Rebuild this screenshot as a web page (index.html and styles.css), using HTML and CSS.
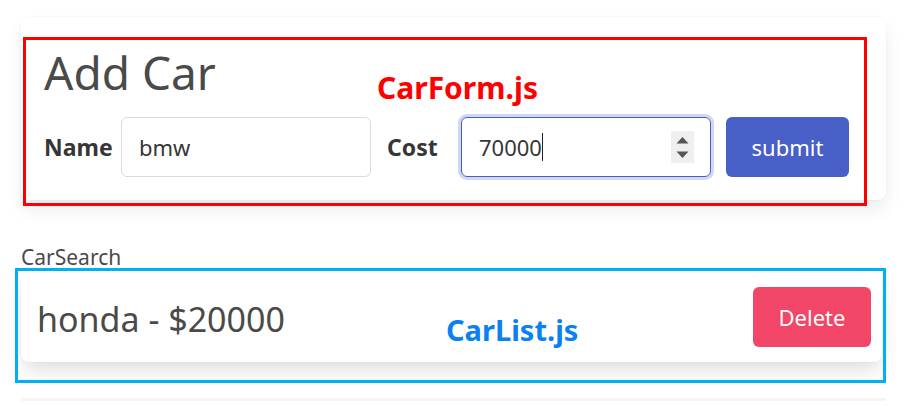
FILE: index.html
```html
<!DOCTYPE html>
<html lang="en">

<head>
  <meta charset="UTF-8" />
  <meta name="viewport" content="width=device-width, initial-scale=1.0" />
  <title>Cars</title>
  <link rel="stylesheet" href="styles.css">
</head>

<body>
  <div class="page">
    <!-- CarForm -->
    <div class="box form-box">
      <h1 class="title">Add Car</h1>
      <form class="car-form">
        <label class="label">Name</label>
        <div class="input">bmw</div>
        <label class="label label-cost">Cost</label>
        <div class="input is-focused">
          <span>70000</span><span class="caret"></span>
          <span class="spinner">
            <svg width="23" height="32" viewBox="0 0 23 32">
              <rect width="23" height="32" fill="#efefef" />
              <path d="M5.5 12.5 L11.5 6 L17.5 12.5 Z" fill="#555" />
              <path d="M5.5 20.5 L11.5 27 L17.5 20.5 Z" fill="#555" />
            </svg>
          </span>
        </div>
        <button class="button is-link" type="button">submit</button>
      </form>
    </div>
    <div class="note note-red">CarForm.js</div>
    <div class="outline outline-red"></div>

    <!-- CarSearch -->
    <div class="search-label">CarSearch</div>

    <!-- CarList -->
    <div class="list">
      <div class="box car-item">
        <p class="car-name">honda - $20000</p>
        <button class="button is-danger" type="button">Delete</button>
      </div>
      <div class="note note-blue">CarList.js</div>
      <div class="outline outline-blue"></div>
    </div>

    <hr class="divider">
  </div>
</body>

</html>
```

FILE: styles.css
```css
body {
  margin: 0;
  background: #fff;
  font-family: "Noto Sans", "Open Sans", sans-serif;
  color: #4a4a4a;
}

.page {
  position: relative;
  padding: 17px 24px 0 21px;
}

.box {
  background: #fff;
  border-radius: 8px;
  box-shadow: 0 10px 20px -3px rgba(10, 10, 10, 0.1), 0 0 0 1px rgba(10, 10, 10, 0.02);
}

.form-box {
  height: 183px;
  box-sizing: border-box;
  padding: 32px 23px 0 23px;
}

.title {
  margin: 0;
  font-size: 46px;
  font-weight: 400;
  line-height: 46px;
  color: #4a4a4a;
}

.car-form {
  display: flex;
  align-items: center;
  margin-top: 22px;
}

.label {
  width: 66px;
  font-size: 23px;
  font-weight: 700;
  color: #363636;
  margin-right: 11px;
  white-space: nowrap;
}

.label-cost {
  width: 48px;
  margin-left: 16px;
  margin-right: 26px;
}

.input {
  position: relative;
  display: flex;
  align-items: center;
  width: 250px;
  height: 60px;
  box-sizing: border-box;
  padding: 0 17px;
  border: 1px solid #dbdbdb;
  border-radius: 6px;
  font-size: 22px;
  color: #363636;
}

.input.is-focused {
  border-color: #485fc7;
  box-shadow: 0 0 0 3px rgba(72, 95, 199, 0.25);
}

.caret {
  display: inline-block;
  width: 1px;
  height: 28px;
  background: #222;
}

.spinner {
  position: absolute;
  right: 16px;
  top: 13px;
  height: 32px;
}

.button {
  height: 60px;
  border: none;
  border-radius: 6px;
  padding: 0 25px;
  font-family: inherit;
  font-size: 22px;
  color: #fff;
}

.is-link {
  margin-left: 15px;
  width: 123px;
  background: #485fc7;
}

.is-danger {
  width: 118px;
  background: #f14668;
}

.search-label {
  margin-top: 43px;
  font-size: 21px;
  line-height: 29px;
}

.list {
  position: relative;
}

.car-item {
  display: flex;
  align-items: center;
  justify-content: space-between;
  height: 90px;
  margin-right: 4px;
  box-sizing: border-box;
  padding: 0 11px 0 16px;
  box-shadow: 0 10px 20px -3px rgba(10, 10, 10, 0.14), 0 0 0 1px rgba(10, 10, 10, 0.02);
}

.car-name {
  margin: 0;
  padding-top: 4px;
  font-size: 34px;
  color: #4a4a4a;
}

.divider {
  margin: 36px 0 0 0;
  height: 3px;
  border: none;
  background: #f5f5f5;
}

/* annotations drawn over the screenshot */
.outline {
  position: absolute;
  border: 3px solid;
  box-sizing: border-box;
}

.outline-red {
  left: 23px;
  top: 37px;
  width: 844px;
  height: 169px;
  border-color: #ff0000;
}

.outline-blue {
  left: -6px;
  top: -4px;
  width: 871px;
  height: 115px;
  border-color: #00b0f0;
}

.note {
  position: absolute;
  font-size: 30px;
  font-weight: 700;
}

.note-red {
  left: 377px;
  top: 67px;
  color: #ff0000;
}

.note-blue {
  left: 425px;
  top: 38px;
  font-size: 29px;
  color: #0a80f5;
}
```
